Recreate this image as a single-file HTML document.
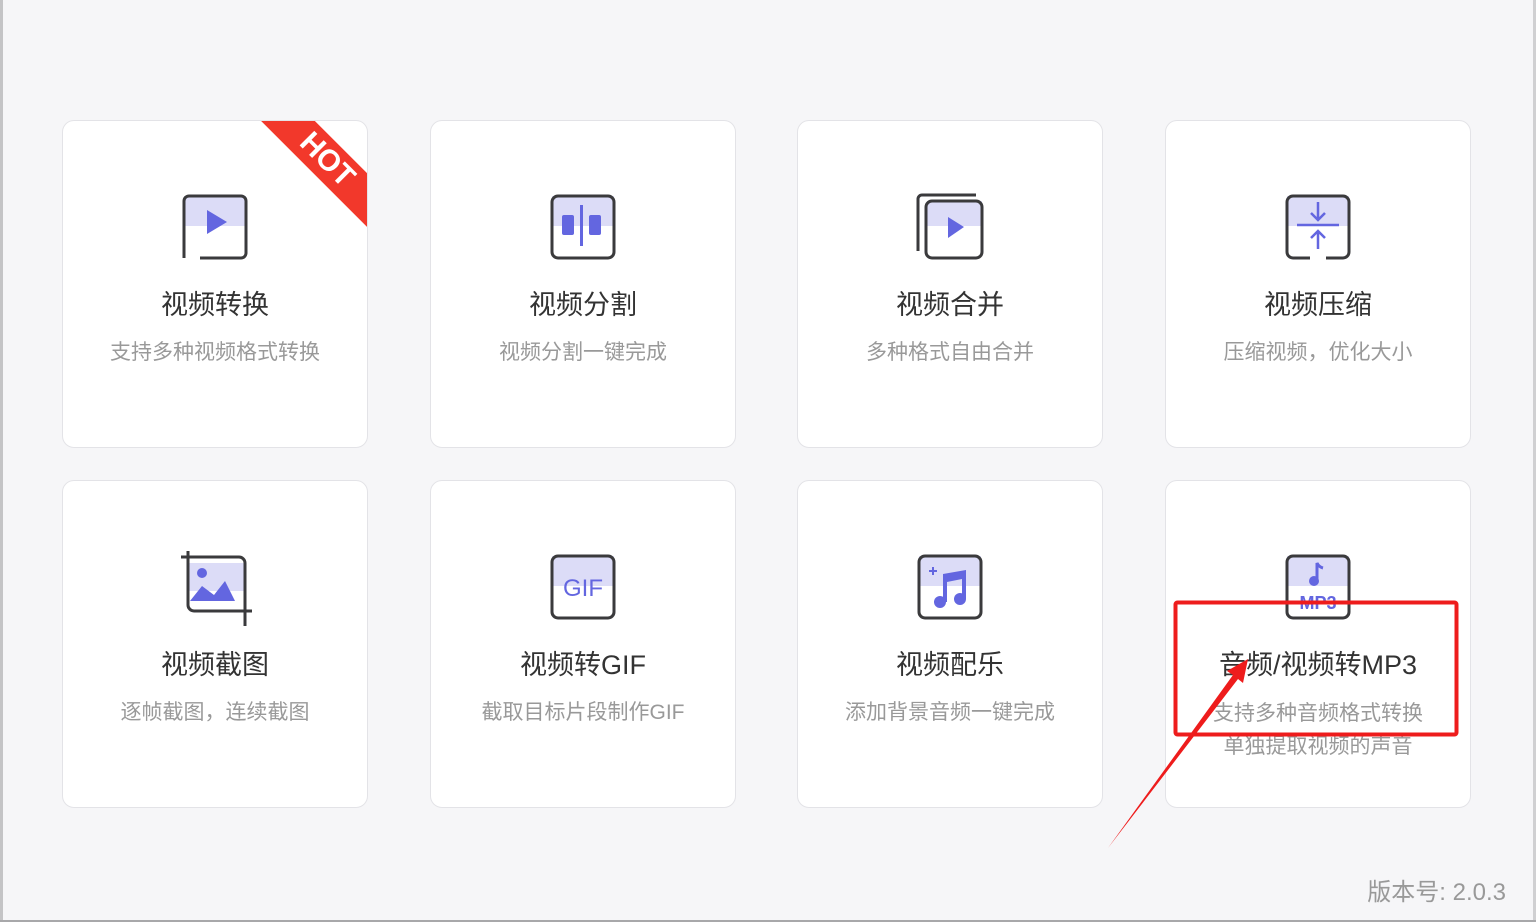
<!DOCTYPE html>
<html><head><meta charset="utf-8"><style>
*{margin:0;padding:0;box-sizing:border-box}
body{width:1536px;height:922px;background:#f6f6f8;position:relative;overflow:hidden;font-family:"Liberation Sans","Noto Sans CJK SC",sans-serif}
.lb{position:absolute;left:0;top:0;width:3px;height:922px;background:#c4c4c6}
.rb{position:absolute;right:0;top:0;width:3px;height:922px;background:#d0d0d2}
.bb{position:absolute;left:0;bottom:0;width:1536px;height:2px;background:#a8a8aa}
.card{position:absolute;width:306px;height:328px;background:#fff;border:1.5px solid #e3e3e7;border-radius:12px;overflow:hidden;text-align:center}
.card svg.ic{position:absolute;left:118px;top:70px}
.t{position:absolute;left:0;right:0;top:166px;font-size:27px;color:#333;line-height:36px}
.s{position:absolute;left:0;right:0;top:218px;font-size:21px;color:#999;line-height:28px}
.hot{position:absolute;right:-40px;top:20px;width:160px;height:38px;background:#f2382b;transform:rotate(45deg);color:#fff;font-weight:bold;font-size:30px;line-height:38px;text-align:center}
.ver{position:absolute;right:30px;top:872px;font-size:24px;color:#999}
</style></head><body>
<div class="lb"></div><div class="rb"></div><div class="bb"></div>

<div class="card" style="left:62px;top:120px">
<div class="hot">HOT</div>
<svg class="ic" width="70" height="70" viewBox="0 0 70 70"><rect x="3" y="5" width="62" height="30" fill="#dcdcf7"/><polygon points="26,19 26,43 46,31" fill="#6366e0"/><path d="M3,67 V10 a5,5 0 0 1 5,-5 H60 a5,5 0 0 1 5,5 V62 a5,5 0 0 1 -5,5 H19" fill="none" stroke="#3a3a3c" stroke-width="3"/></svg>
<div class="t">视频转换</div><div class="s">支持多种视频格式转换</div></div>

<div class="card" style="left:430px;top:120px">
<svg class="ic" width="70" height="70" viewBox="0 0 70 70"><rect x="3" y="5" width="62" height="30" fill="#dcdcf7"/><rect x="13" y="24" width="12" height="20" rx="2" fill="#6366e0"/><rect x="40" y="24" width="12" height="20" rx="2" fill="#6366e0"/><rect x="31" y="14" width="3" height="41" fill="#6366e0"/><rect x="3" y="5" width="62" height="62" rx="6" fill="none" stroke="#3a3a3c" stroke-width="3"/></svg>
<div class="t">视频分割</div><div class="s">视频分割一键完成</div></div>

<div class="card" style="left:797px;top:120px">
<svg class="ic" width="70" height="70" viewBox="0 0 70 70"><rect x="11" y="10" width="55" height="25" fill="#dcdcf7"/><polygon points="32,26 32,47 48,36" fill="#6366e0"/><path d="M2,60 V8 a4,4 0 0 1 4,-4 H60" fill="none" stroke="#3a3a3c" stroke-width="3"/><rect x="10" y="10" width="56" height="57" rx="6" fill="none" stroke="#3a3a3c" stroke-width="3"/></svg>
<div class="t">视频合并</div><div class="s">多种格式自由合并</div></div>

<div class="card" style="left:1165px;top:120px">
<svg class="ic" width="70" height="70" viewBox="0 0 70 70"><rect x="3" y="5" width="62" height="30" fill="#dcdcf7"/><path d="M13,34 H55 M34,11 V29 M27,22 L34,29 L41,22 M34,58 V40 M27,47 L34,40 L41,47" fill="none" stroke="#6366e0" stroke-width="2.5"/><path d="M26,67 H9 a6,6 0 0 1 -6,-6 V11 a6,6 0 0 1 6,-6 H59 a6,6 0 0 1 6,6 V61 a6,6 0 0 1 -6,6 H42" fill="none" stroke="#3a3a3c" stroke-width="3"/></svg>
<div class="t">视频压缩</div><div class="s">压缩视频，优化大小</div></div>

<div class="card" style="left:62px;top:480px">
<svg class="ic" width="75" height="75" viewBox="0 0 75 75"><rect x="7" y="12" width="57" height="28" fill="#dcdcf7"/><circle cx="21" cy="22" r="5" fill="#6366e0"/><polygon points="9,50 21,35 33,44 44,30 54,50" fill="#6366e0"/><path d="M0,6 H58 a6,6 0 0 1 6,6 V75 M7,0 V54 a6,6 0 0 0 6,6 H71" fill="none" stroke="#3a3a3c" stroke-width="3"/></svg>
<div class="t">视频截图</div><div class="s">逐帧截图，连续截图</div></div>

<div class="card" style="left:430px;top:480px">
<svg class="ic" width="70" height="70" viewBox="0 0 70 70"><rect x="3" y="5" width="62" height="30" fill="#dcdcf7"/><text x="34" y="45" text-anchor="middle" font-family="Liberation Sans,sans-serif" font-size="24" fill="#6366e0">GIF</text><rect x="3" y="5" width="62" height="62" rx="6" fill="none" stroke="#3a3a3c" stroke-width="3"/></svg>
<div class="t">视频转GIF</div><div class="s">截取目标片段制作GIF</div></div>

<div class="card" style="left:797px;top:480px">
<svg class="ic" width="70" height="70" viewBox="0 0 70 70"><rect x="3" y="5" width="62" height="30" fill="#dcdcf7"/><path d="M13,20 H21 M17,16 V24" stroke="#6366e0" stroke-width="2"/><path d="M27,23 L50,19 V48 H46 V28 L31,31 V51 H27Z" fill="#6366e0"/><circle cx="24" cy="51" r="6" fill="#6366e0"/><circle cx="44" cy="48" r="6" fill="#6366e0"/><rect x="3" y="5" width="62" height="62" rx="6" fill="none" stroke="#3a3a3c" stroke-width="3"/></svg>
<div class="t">视频配乐</div><div class="s">添加背景音频一键完成</div></div>

<div class="card" style="left:1165px;top:480px">
<svg class="ic" width="70" height="70" viewBox="0 0 70 70"><rect x="3" y="5" width="62" height="30" fill="#dcdcf7"/><circle cx="30" cy="30" r="5" fill="#6366e0"/><path d="M33,30 V12 Q35,16 39,17" fill="none" stroke="#6366e0" stroke-width="3"/><text x="34" y="58" text-anchor="middle" font-family="Liberation Sans,sans-serif" font-size="18" font-weight="bold" fill="#6366e0">MP3</text><rect x="3" y="5" width="62" height="62" rx="6" fill="none" stroke="#3a3a3c" stroke-width="3"/></svg>
<div class="t">音频/视频转MP3</div><div class="s" style="line-height:33px;top:216px">支持多种音频格式转换<br>单独提取视频的声音</div></div>

<svg style="position:absolute;left:0;top:0" width="1536" height="922">
<rect x="1175.5" y="602.5" width="281" height="132" rx="2" fill="none" stroke="#ee1c1c" stroke-width="4"/>
<polygon points="1108,848 1233,675 1227,671 1248,659 1243,683 1238,679" fill="#ee1c1c"/>
</svg>
<div class="ver">版本号: 2.0.3</div>
</body></html>
